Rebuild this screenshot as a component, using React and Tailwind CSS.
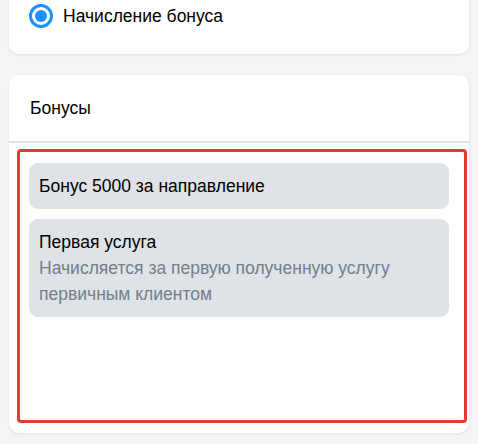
import React from "react";

const bonuses = [
  { id: 1, title: "Бонус 5000 за направление" },
  {
    id: 2,
    title: "Первая услуга",
    desc: "Начисляется за первую полученную услугу первичным клиентом",
  },
];

export default function App() {
  return (
    <div
      className="w-[478px] h-[444px] overflow-hidden bg-[#f3f4f6] px-[9px] text-[17.5px] text-black"
      style={{ fontFamily: '"Liberation Sans", Arial, sans-serif' }}
    >
      {/* type card (top cut off) */}
      <div className="w-[460px] bg-white rounded-b-[10px] shadow-[0_1px_3px_rgba(0,0,0,0.08)] pt-[4px] pb-[26px] px-[20px]">
        <label className="flex items-center gap-[10px]">
          <span className="w-[24px] h-[24px] rounded-full border-[3px] border-[#1e90ff] flex items-center justify-center">
            <span className="w-[12px] h-[12px] rounded-full bg-[#1e90ff]"></span>
          </span>
          <span className="leading-[24px]">Начисление бонуса</span>
        </label>
      </div>

      {/* bonuses card */}
      <div className="mt-[21px] w-[460px] bg-white rounded-[10px] shadow-[0_1px_3px_rgba(0,0,0,0.08)] pb-[10px]">
        <div className="h-[66px] flex items-center px-[21px]">
          <h2>Бонусы</h2>
        </div>
        <div className="h-[2px] bg-[#e3e3e3]"></div>

        <div className="mt-[6px] ml-[8px] mr-[2px] h-[274px] border-[3px] border-[#e53a2f] rounded-[4px] pl-[9px] pr-[15px] pt-[11px] flex flex-col gap-[10px]">
          {bonuses.map((b) => (
            <div key={b.id} className="bg-[#dfe2e6] rounded-[9px] p-[10px] leading-[26px]">
              <div>{b.title}</div>
              {b.desc && <div className="text-[#6f808d]">{b.desc}</div>}
            </div>
          ))}
        </div>
      </div>
    </div>
  );
}
